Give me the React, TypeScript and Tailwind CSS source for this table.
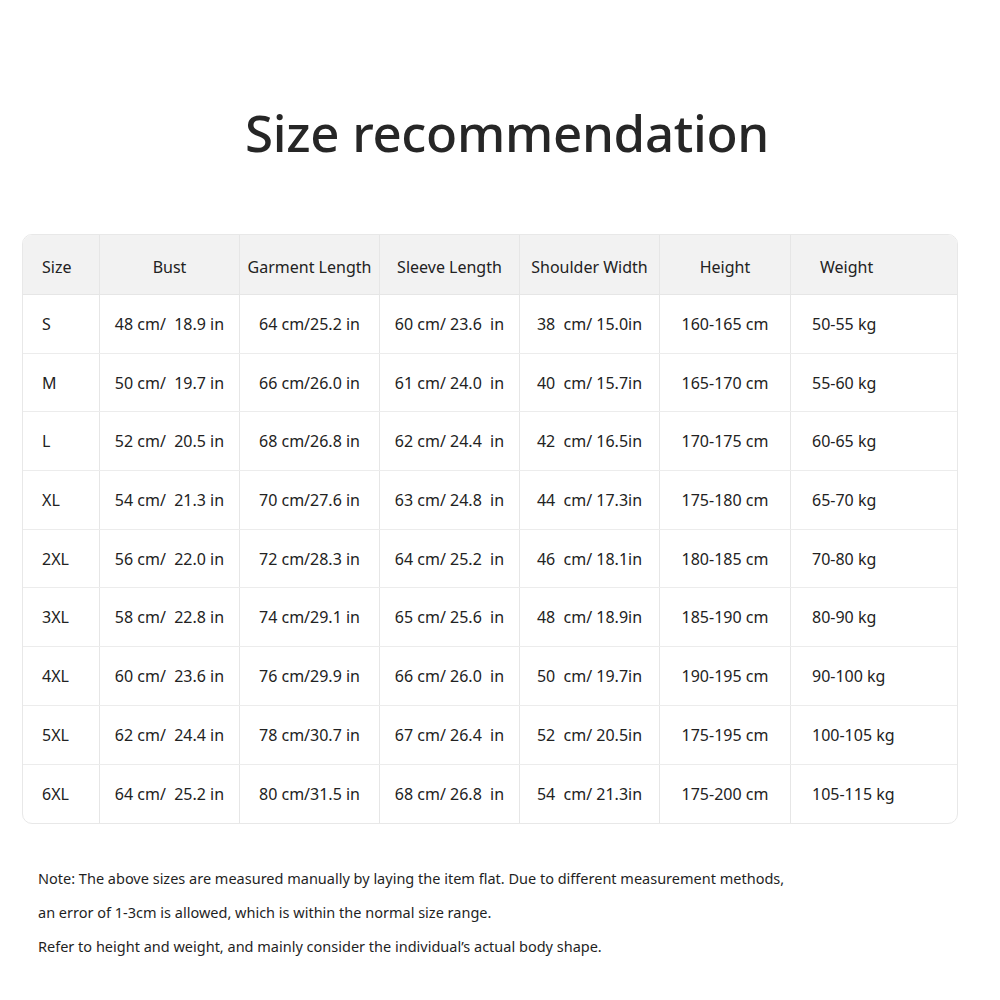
const headers = ["Size", "Bust", "Garment Length", "Sleeve Length", "Shoulder Width", "Height", "Weight"];

const rows = [
  ["S", "48 cm/  18.9 in", "64 cm/25.2 in", "60 cm/ 23.6  in", "38  cm/ 15.0in", "160-165 cm", "50-55 kg"],
  ["M", "50 cm/  19.7 in", "66 cm/26.0 in", "61 cm/ 24.0  in", "40  cm/ 15.7in", "165-170 cm", "55-60 kg"],
  ["L", "52 cm/  20.5 in", "68 cm/26.8 in", "62 cm/ 24.4  in", "42  cm/ 16.5in", "170-175 cm", "60-65 kg"],
  ["XL", "54 cm/  21.3 in", "70 cm/27.6 in", "63 cm/ 24.8  in", "44  cm/ 17.3in", "175-180 cm", "65-70 kg"],
  ["2XL", "56 cm/  22.0 in", "72 cm/28.3 in", "64 cm/ 25.2  in", "46  cm/ 18.1in", "180-185 cm", "70-80 kg"],
  ["3XL", "58 cm/  22.8 in", "74 cm/29.1 in", "65 cm/ 25.6  in", "48  cm/ 18.9in", "185-190 cm", "80-90 kg"],
  ["4XL", "60 cm/  23.6 in", "76 cm/29.9 in", "66 cm/ 26.0  in", "50  cm/ 19.7in", "190-195 cm", "90-100 kg"],
  ["5XL", "62 cm/  24.4 in", "78 cm/30.7 in", "67 cm/ 26.4  in", "52  cm/ 20.5in", "175-195 cm", "100-105 kg"],
  ["6XL", "64 cm/  25.2 in", "80 cm/31.5 in", "68 cm/ 26.8  in", "54  cm/ 21.3in", "175-200 cm", "105-115 kg"],
];

const widths = ["w-[77px]", "w-[140px]", "w-[140px]", "w-[140px]", "w-[140px]", "w-[131px]", "flex-1"];

function cellAlign(i: number) {
  if (i === 0) return "justify-start pl-[19px]";
  if (i === 6) return "justify-start pl-[21px]";
  return "justify-center";
}

export default function App() {
  return (
    <div
      className="w-[1000px] h-[1000px] bg-white text-[#222]"
      style={{ fontFamily: '"Noto Sans", "Open Sans", sans-serif' }}
    >
      <h1 className="pt-[96px] text-center text-[51px] leading-[72px] font-medium text-[#262626] tracking-[-0.3px] pl-[14px]">
        Size recommendation
      </h1>

      <div className="ml-[22px] mr-[42px] mt-[66px] overflow-hidden rounded-[10px] border border-[#e8e8e8]">
        <div className="flex h-[60px] bg-[#f2f2f2] border-b border-[#e6e6e6]">
          {headers.map((h, i) => (
            <div
              key={h}
              className={`${widths[i]} ${cellAlign(i)} flex items-center pt-[4px] text-[16px] whitespace-pre ${i < 6 ? "border-r border-[#e6e6e6]" : ""} ${i === 6 ? "pl-[29px]" : ""}`}
            >
              {h}
            </div>
          ))}
        </div>
        {rows.map((r, ri) => (
          <div
            key={r[0]}
            className={`flex h-[58.7px] ${ri < rows.length - 1 ? "border-b border-[#ececec]" : ""}`}
          >
            {r.map((c, i) => (
              <div
                key={i}
                className={`${widths[i]} ${cellAlign(i)} flex items-center text-[16px] whitespace-pre ${i < 6 ? "border-r border-[#e6e6e6]" : ""}`}
              >
                {c}
              </div>
            ))}
          </div>
        ))}
      </div>

      <div className="mt-[37px] pl-[38px] text-[14.5px] leading-[34px] text-[#1f1f1f]">
        <p>Note: The above sizes are measured manually by laying the item flat. Due to different measurement methods,</p>
        <p>an error of 1-3cm is allowed, which is within the normal size range.</p>
        <p>Refer to height and weight, and mainly consider the individual’s actual body shape.</p>
      </div>
    </div>
  );
}
